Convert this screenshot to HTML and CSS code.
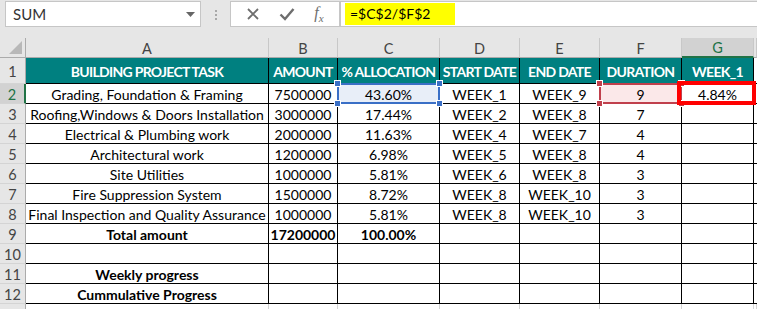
FILE: index.html
```html
<!DOCTYPE html>
<html>

<head>
    <title>Project Progress</title>
    <link rel="stylesheet" href="styles.css">
</head>

<body>

    <div class="toolbar">
        <div class="name-box">
            <span>SUM</span>
            <svg class="dropdown" width="9" height="5" viewBox="0 0 9 5"><path d="M0 0h9L4.5 5z" fill="#666"/></svg>
        </div>
        <div class="grip"><i></i><i></i><i></i></div>
        <div class="fx-buttons">
            <svg width="14" height="14" viewBox="0 0 14 14"><path d="M2 2l10 10M12 2L2 12" stroke="#6e6e6e" stroke-width="1.8" fill="none"/></svg>
            <svg width="16" height="14" viewBox="0 0 16 14"><path d="M1.5 7.5l4.5 4.5L14.5 2" stroke="#6e6e6e" stroke-width="2.4" fill="none"/></svg>
            <span class="fx">f<sub>x</sub></span>
        </div>
        <div class="formula"><span class="highlight">=$C$2/$F$2</span></div>
    </div>

    <div class="sheet">
        <!-- column headers -->
        <div class="ch corner"><span class="tri"></span></div>
        <div class="ch">A</div>
        <div class="ch">B</div>
        <div class="ch">C</div>
        <div class="ch">D</div>
        <div class="ch">E</div>
        <div class="ch">F</div>
        <div class="ch active-col">G</div>
        <div class="ch"></div>

        <!-- row 1 -->
        <div class="rh">1</div>
        <div class="c head">BUILDING PROJECT TASK</div>
        <div class="c head">AMOUNT</div>
        <div class="c head">% ALLOCATION</div>
        <div class="c head">START DATE</div>
        <div class="c head">END DATE</div>
        <div class="c head">DURATION</div>
        <div class="c head">WEEK_1</div>
        <div class="c blank"></div>

        <!-- row 2 -->
        <div class="rh active-row">2</div>
        <div class="c">Grading, Foundation &amp; Framing</div>
        <div class="c">7500000</div>
        <div class="c ref-blue">43.60%<span class="ref-box"><i class="h tl"></i><i class="h tr"></i><i class="h bl"></i><i class="h br"></i></span></div>
        <div class="c">WEEK_1</div>
        <div class="c">WEEK_9</div>
        <div class="c ref-red">9<span class="ref-box"><i class="h tl"></i><i class="h tr"></i><i class="h bl"></i><i class="h br"></i></span></div>
        <div class="c target">4.84%<span class="mark"></span></div>
        <div class="c blank"></div>

        <!-- row 3 -->
        <div class="rh">3</div>
        <div class="c">Roofing,Windows &amp; Doors Installation</div>
        <div class="c">3000000</div>
        <div class="c">17.44%</div>
        <div class="c">WEEK_2</div>
        <div class="c">WEEK_8</div>
        <div class="c">7</div>
        <div class="c"></div>
        <div class="c blank"></div>

        <!-- row 4 -->
        <div class="rh">4</div>
        <div class="c">Electrical &amp; Plumbing work</div>
        <div class="c">2000000</div>
        <div class="c">11.63%</div>
        <div class="c">WEEK_4</div>
        <div class="c">WEEK_7</div>
        <div class="c">4</div>
        <div class="c"></div>
        <div class="c blank"></div>

        <!-- row 5 -->
        <div class="rh">5</div>
        <div class="c">Architectural work</div>
        <div class="c">1200000</div>
        <div class="c">6.98%</div>
        <div class="c">WEEK_5</div>
        <div class="c">WEEK_8</div>
        <div class="c">4</div>
        <div class="c"></div>
        <div class="c blank"></div>

        <!-- row 6 -->
        <div class="rh">6</div>
        <div class="c">Site Utilities</div>
        <div class="c">1000000</div>
        <div class="c">5.81%</div>
        <div class="c">WEEK_6</div>
        <div class="c">WEEK_8</div>
        <div class="c">3</div>
        <div class="c"></div>
        <div class="c blank"></div>

        <!-- row 7 -->
        <div class="rh">7</div>
        <div class="c">Fire Suppression System</div>
        <div class="c">1500000</div>
        <div class="c">8.72%</div>
        <div class="c">WEEK_8</div>
        <div class="c">WEEK_10</div>
        <div class="c">3</div>
        <div class="c"></div>
        <div class="c blank"></div>

        <!-- row 8 -->
        <div class="rh">8</div>
        <div class="c">Final Inspection and Quality Assurance</div>
        <div class="c">1000000</div>
        <div class="c">5.81%</div>
        <div class="c">WEEK_8</div>
        <div class="c">WEEK_10</div>
        <div class="c">3</div>
        <div class="c"></div>
        <div class="c blank"></div>

        <!-- row 9 -->
        <div class="rh">9</div>
        <div class="c bold">Total amount</div>
        <div class="c bold">17200000</div>
        <div class="c bold">100.00%</div>
        <div class="c"></div>
        <div class="c"></div>
        <div class="c"></div>
        <div class="c"></div>
        <div class="c blank"></div>

        <!-- row 10 -->
        <div class="rh">10</div>
        <div class="c"></div>
        <div class="c"></div>
        <div class="c"></div>
        <div class="c"></div>
        <div class="c"></div>
        <div class="c"></div>
        <div class="c"></div>
        <div class="c blank"></div>

        <!-- row 11 -->
        <div class="rh">11</div>
        <div class="c bold">Weekly progress</div>
        <div class="c"></div>
        <div class="c"></div>
        <div class="c"></div>
        <div class="c"></div>
        <div class="c"></div>
        <div class="c"></div>
        <div class="c blank"></div>

        <!-- row 12 -->
        <div class="rh">12</div>
        <div class="c bold">Cummulative Progress</div>
        <div class="c"></div>
        <div class="c"></div>
        <div class="c"></div>
        <div class="c"></div>
        <div class="c"></div>
        <div class="c"></div>
        <div class="c blank"></div>

        <!-- row 13, cut off by the window -->
        <div class="rh"></div>
        <div class="e"></div>
        <div class="e"></div>
        <div class="e"></div>
        <div class="e"></div>
        <div class="e"></div>
        <div class="e"></div>
        <div class="e"></div>
        <div class="e"></div>
    </div>

</body>
</html>
```

FILE: styles.css
```css
body {
    margin: 0;
    background-color: #e6e6e6;
    font-family: "Lato", "Liberation Sans", sans-serif;
    overflow: hidden;
}

/* formula bar */

.toolbar {
    display: flex;
    height: 38px;
    padding-top: 1px;
    box-sizing: border-box;
}

.name-box {
    display: flex;
    align-items: center;
    justify-content: space-between;
    margin-left: 5px;
    width: 196px;
    height: 26px;
    padding: 0 5px 0 7px;
    box-sizing: border-box;
    background-color: #fff;
    border: 1px solid #c6c6c6;
    font-size: 15px;
    color: #333;
}

.grip {
    display: flex;
    flex-direction: column;
    align-items: center;
    gap: 2px;
    width: 29px;
    padding-top: 9px;
    box-sizing: border-box;
}

.grip i {
    width: 2px;
    height: 2px;
    background-color: #a8a8a8;
}

.fx-buttons {
    display: flex;
    align-items: center;
    justify-content: space-around;
    width: 110px;
    height: 26px;
    padding: 0 6px;
    box-sizing: border-box;
    background-color: #fff;
    border: 1px solid #c6c6c6;
}

.fx {
    font-family: "Liberation Serif", serif;
    font-style: italic;
    font-size: 16px;
    color: #6e6e6e;
}

.fx sub {
    font-size: 11px;
}

.formula {
    flex: 1;
    height: 26px;
    padding: 1px 0 0 4px;
    box-sizing: border-box;
    background-color: #fff;
    border: 1px solid #c6c6c6;
    border-right: none;
}

.highlight {
    display: inline-block;
    height: 22px;
    line-height: 22px;
    width: 110px;
    padding-left: 5px;
    box-sizing: border-box;
    background-color: #ffff00;
    font-size: 14px;
    color: #000;
}

/* grid */

.sheet {
    display: grid;
    grid-template-columns: 26px 243px 69px 102px 80px 80px 82px 72px 1fr;
    grid-template-rows: 20px 26px repeat(11, 20px) 20px;
    background-color: #fff;
    font-size: 14px;
}

.sheet > div {
    box-sizing: border-box;
    display: flex;
    align-items: center;
    justify-content: center;
    white-space: nowrap;
}

.ch {
    background-color: #e6e6e6;
    border-right: 1px solid #c8c8c8;
    border-bottom: 1px solid #ababab;
    color: #444;
    font-size: 14.5px;
    padding-top: 1px;
}

.ch.corner {
    position: relative;
    border-right-color: #ababab;
}

.tri {
    position: absolute;
    right: 3px;
    bottom: 3px;
    border-left: 13px solid transparent;
    border-bottom: 13px solid #b8b8b8;
}

.ch.active-col {
    background-color: #d2d2d2;
    border-bottom: 2px solid #217346;
    color: #217346;
}

.rh {
    background-color: #e6e6e6;
    border-right: 1px solid #ababab;
    border-bottom: 1px solid #d4d4d4;
    color: #444;
    font-size: 14.5px;
    padding-top: 1px;
}

.rh.active-row {
    background-color: #d2d2d2;
    border-right: 2px solid #217346;
    color: #217346;
}

.c {
    border-right: 1px solid #000;
    border-bottom: 1px solid #000;
    color: #000;
    padding-top: 1px;
}

.c.head {
    background-color: #008080;
    color: #fff;
    font-weight: bold;
    font-size: 14px;
    letter-spacing: -0.7px;
    padding-top: 2px;
}

.c.blank {
    border-right: none;
    background-color: #fff;
}

.c.bold {
    font-weight: bold;
}

.e {
    border-right: 1px solid #d4d4d4;
}

/* reference highlights */

.ref-blue,
.ref-red,
.target {
    position: relative;
}

.ref-blue {
    background-color: #e8eef8;
}

.ref-red {
    background-color: #fbe8e9;
}

.ref-box {
    position: absolute;
    top: -1px;
    left: -1px;
    right: -1px;
    bottom: -1px;
    border: 2px solid #3a6fc6;
}

.ref-red .ref-box {
    border-color: #c0404c;
}

.ref-box .h {
    position: absolute;
    width: 5px;
    height: 5px;
    background-color: #3a6fc6;
    border: 1px solid #fff;
}

.ref-red .ref-box .h {
    background-color: #c0404c;
}

.h.tl { top: -5px; left: -5px; }
.h.tr { top: -5px; right: -5px; }
.h.bl { bottom: -5px; left: -5px; }
.h.br { bottom: -5px; right: -5px; }

.mark {
    position: absolute;
    top: -3px;
    left: -5px;
    right: -3px;
    bottom: -2px;
    border: 4px solid #ff0000;
}
```
